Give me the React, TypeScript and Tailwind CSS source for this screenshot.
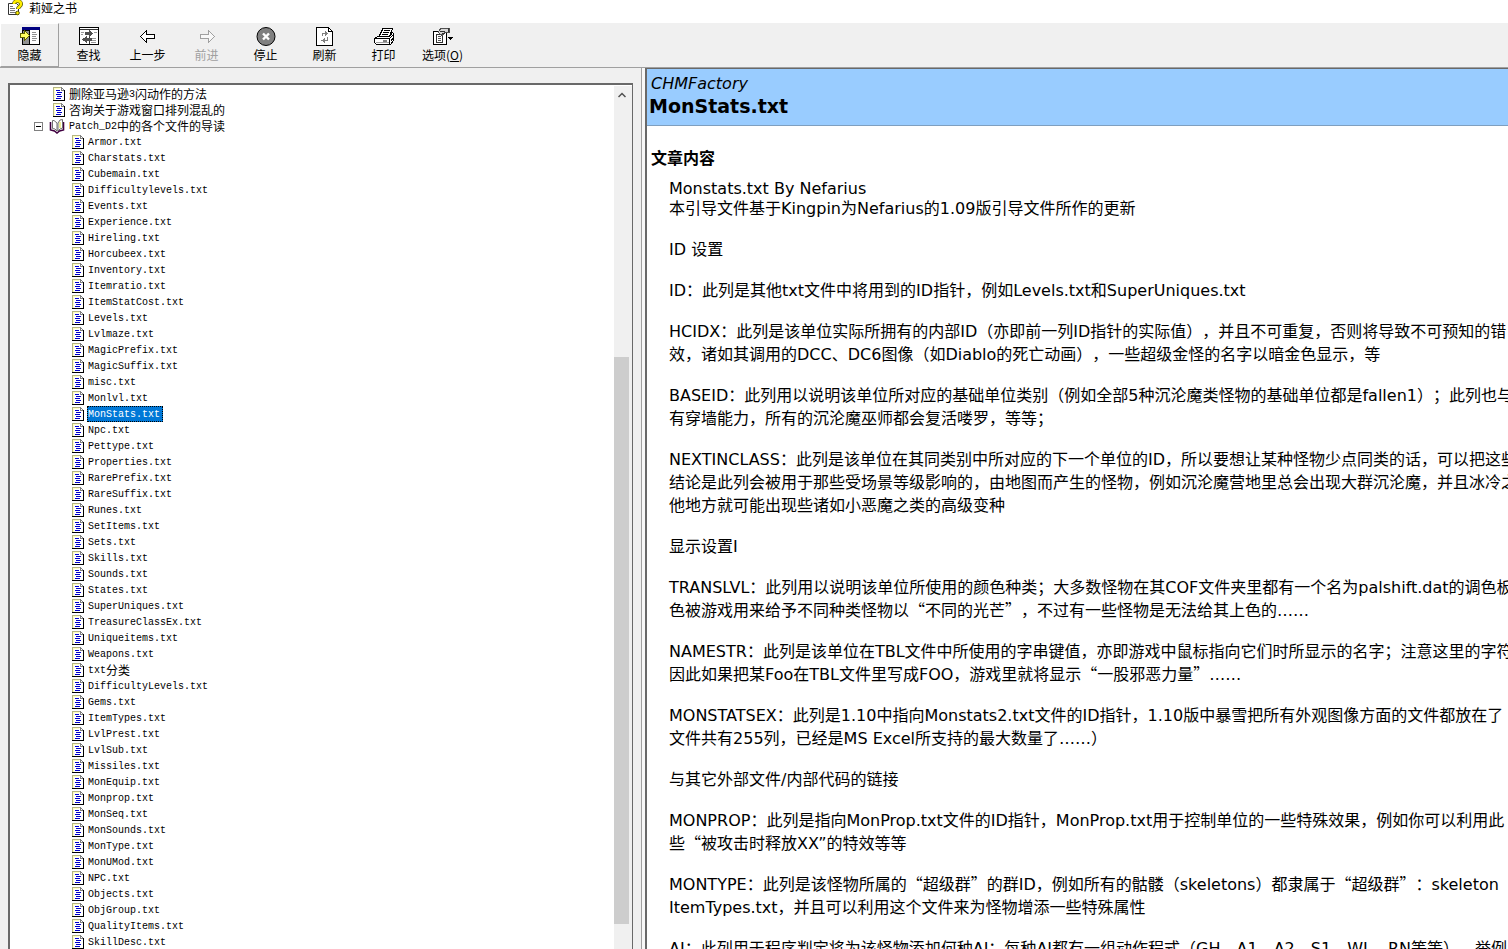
import { useState } from "react";
import type { ReactNode } from "react";

const tools = [
	{ id: "hide", label: "隐藏", raised: true },
	{ id: "find", label: "查找" },
	{ id: "back", label: "上一步" },
	{ id: "forward", label: "前进", disabled: true },
	{ id: "stop", label: "停止" },
	{ id: "refresh", label: "刷新" },
	{ id: "print", label: "打印" },
	{ id: "options", label: "选项" },
];

const topics = [
	"Armor.txt", "Charstats.txt", "Cubemain.txt", "Difficultylevels.txt", "Events.txt",
	"Experience.txt", "Hireling.txt", "Horcubeex.txt", "Inventory.txt", "Itemratio.txt",
	"ItemStatCost.txt", "Levels.txt", "Lvlmaze.txt", "MagicPrefix.txt", "MagicSuffix.txt",
	"misc.txt", "Monlvl.txt", "MonStats.txt", "Npc.txt", "Pettype.txt", "Properties.txt",
	"RarePrefix.txt", "RareSuffix.txt", "Runes.txt", "SetItems.txt", "Sets.txt", "Skills.txt",
	"Sounds.txt", "States.txt", "SuperUniques.txt", "TreasureClassEx.txt", "Uniqueitems.txt",
	"Weapons.txt", "txt分类", "DifficultyLevels.txt", "Gems.txt", "ItemTypes.txt", "LvlPrest.txt",
	"LvlSub.txt", "Missiles.txt", "MonEquip.txt", "Monprop.txt", "MonSeq.txt", "MonSounds.txt",
	"MonType.txt", "MonUMod.txt", "NPC.txt", "Objects.txt", "ObjGroup.txt", "QualityItems.txt",
	"SkillDesc.txt",
];

const paragraphs = [
	["ID 设置"],
	["ID：此列是其他txt文件中将用到的ID指针，例如Levels.txt和SuperUniques.txt"],
	[
		"HCIDX：此列是该单位实际所拥有的内部ID（亦即前一列ID指针的实际值），并且不可重复，否则将导致不可预知的错",
		"效，诸如其调用的DCC、DC6图像（如Diablo的死亡动画），一些超级金怪的名字以暗金色显示，等",
	],
	[
		"BASEID：此列用以说明该单位所对应的基础单位类别（例如全部5种沉沦魔类怪物的基础单位都是fallen1）；此列也与",
		"有穿墙能力，所有的沉沦魔巫师都会复活喽罗，等等；",
	],
	[
		"NEXTINCLASS：此列是该单位在其同类别中所对应的下一个单位的ID，所以要想让某种怪物少点同类的话，可以把这些",
		"结论是此列会被用于那些受场景等级影响的，由地图而产生的怪物，例如沉沦魔营地里总会出现大群沉沦魔，并且冰冷之",
		"他地方就可能出现些诸如小恶魔之类的高级变种",
	],
	["显示设置I"],
	[
		"TRANSLVL：此列用以说明该单位所使用的颜色种类；大多数怪物在其COF文件夹里都有一个名为palshift.dat的调色板",
		"色被游戏用来给予不同种类怪物以“不同的光芒”，不过有一些怪物是无法给其上色的……",
	],
	[
		"NAMESTR：此列是该单位在TBL文件中所使用的字串键值，亦即游戏中鼠标指向它们时所显示的名字；注意这里的字符",
		"因此如果把某Foo在TBL文件里写成FOO，游戏里就将显示“一股邪恶力量”……",
	],
	[
		"MONSTATSEX：此列是1.10中指向Monstats2.txt文件的ID指针，1.10版中暴雪把所有外观图像方面的文件都放在了",
		"文件共有255列，已经是MS Excel所支持的最大数量了……）",
	],
	["与其它外部文件/内部代码的链接"],
	[
		"MONPROP：此列是指向MonProp.txt文件的ID指针，MonProp.txt用于控制单位的一些特殊效果，例如你可以利用此",
		"些“被攻击时释放XX”的特效等等",
	],
	[
		"MONTYPE：此列是该怪物所属的“超级群”的群ID，例如所有的骷髅（skeletons）都隶属于“超级群”：skeleton",
		"ItemTypes.txt，并且可以利用这个文件来为怪物增添一些特殊属性",
	],
	["AI：此列用于程序判定将为该怪物添加何种AI；每种AI都有一组动作程式（GH、A1、A2、S1、WL、RN等等），举例"],
];

// Odd pieces are the Latin runs, the others are Chinese
const Mixed = ({ text, latin }: { text: string; latin: string }) => (
	<>
		{text.split(/([\x20-\x7e]+”?|…+)/).map((part, i) =>
			i % 2 ? <span key={i} className={latin}>{part}</span> : part
		)}
	</>
);

const ToolIcon = ({ id }: { id: string }) => {
	const shapes: Record<string, ReactNode> = {
		hide: (
			<>
				<path d="M2 0h18v18H2z" fill="#000" />
				<path d="M3 4h6v13H3z" fill="#909090" />
				<path d="M10 3h9v14h-9z" fill="#fff" />
				<path d="M2 0h18v3H2z" fill="#000080" />
				<path d="M12 5.500h4M12 7.500h5M12 9.500h4M12 11.500h5M12 13.500h4" stroke="#909090" />
				<path d="M0.500 6.500h4v-3l5 5-5 5v-3h-4z" fill="#ffff60" stroke="#606000" />
			</>
		),
		find: (
			<>
				<path d="M0.500 0.500h19v17h-19z" fill="#fff" stroke="#000" />
				<path d="M1 2.500h18M10.500 3v14" stroke="#333" />
				<path d="M2 5.500h3M2 7.500h2M12 11.500h5M12 13.500h5M12 15.500h5M15 5.500h3" stroke="#999" />
				<path d="M6 5h4V3l4 3.500-4 3.500V8H6zM8 11h5v3H8v2l-5-3.500L8 9z" fill="#505050" />
			</>
		),
		back: <path d="M2.500 9.500l6-6v4h8v4h-8v4z" fill="#fff" stroke="#000" />,
		forward: <path d="M17.500 9.500l-6-6v4h-8v4h8v4z" fill="#f8f8f8" stroke="#a0a0a0" />,
		stop: (
			<>
				<circle cx="10" cy="9.500" r="9" fill="#808080" stroke="#000" />
				<path d="M7 6.500l6 6M13 6.500l-6 6" stroke="#fff" strokeWidth="2.400" />
			</>
		),
		refresh: (
			<>
				<path d="M1.500 0.500h12l4 4v14h-16z" fill="#fff" stroke="#000" />
				<path d="M13.500 0.500v4h4" fill="none" stroke="#000" />
				<path d="M7.500 9V6.500H10M12.500 10v3.500H9" fill="none" stroke="#808080" />
				<path d="M10 4v5l3-2.500zM9.500 11v5l-3-2.500z" fill="#808080" />
			</>
		),
		print: (
			<>
				<path d="M5 9.500l4-8h9.500l-3 8z" fill="#fff" stroke="#000" />
				<path d="M10 3.500h6M9 5.500h6M8 7.500h6" stroke="#000" />
				<path d="M0.500 11.500l3-2h12l3-4 1 1v7l-3 4h-14l-2-2z" fill="#fff" stroke="#000" />
				<path d="M1 11.500h14.500v5" fill="none" stroke="#000" />
				<path d="M15.500 11.500l4-4M16.500 14.500l3-4" stroke="#000" />
				<path d="M9 13.500h4" stroke="#808080" strokeWidth="2" />
				<path d="M2 15.500h13" stroke="#a0a0a0" />
			</>
		),
		options: (
			<>
				<path d="M0.500 4.500h13v13h-13z" fill="#fff" stroke="#000" />
				<path d="M3.500 7.500h6v8h-6z" fill="#fff" stroke="#333" />
				<path d="M5 9.500h3M5 11.500h3M5 13.500h3" stroke="#555" />
				<path d="M5 5l3-3.500h8v4h-4l-3 3z" fill="#d8d8d8" stroke="#505050" />
				<path d="M7 4.500h5M9 6.500h3M15.500 1v4" stroke="#333" />
				<path d="M15 10h5l-2.500 3z" fill="#000" />
			</>
		),
	};
	return (
		<svg className="h-5 w-5" viewBox="0 0 20 20" shapeRendering={id === "stop" ? "auto" : "crispEdges"} aria-hidden="true">
			{shapes[id]}
		</svg>
	);
};

const PageIcon = () => (
	<svg className="h-4 w-4 shrink-0" viewBox="0 0 16 16" shapeRendering="crispEdges" aria-hidden="true">
		<path d="M1 1h8l3 3v10H1z" fill="#fff" />
		<path d="M1.500 14V1.500H9" fill="none" stroke="#b5b583" />
		<path d="M2.500 14V2.500H8" fill="none" stroke="#ffffc0" />
		<path d="M9 1h1v1h1v1h1v1h1v1H9z" fill="#808080" />
		<path d="M10 3h1v1h-1z" fill="#fff" />
		<path d="M12.500 4v10.500H1" fill="none" stroke="#000" />
		<path d="M4 4.500h4M5 6.500h5M4 8.500h5M5 10.500h5M4 12.500h5" stroke="#0000c8" />
	</svg>
);

const BookIcon = () => (
	<svg className="h-4 w-4 shrink-0" viewBox="0 0 16 16" aria-hidden="true">
		<path d="M1.500 4v8l4 1 2.500 2 2.500-2 4-1V4" fill="#fff" stroke="#400040" strokeWidth="1.600" />
		<path d="M3.500 2.500h1.500L8 5v8l-2-2-2.500-.5z" fill="#fff" stroke="#707070" />
		<path d="M9 5l2-3 2.500-.5V10l-2.500 1-2 2z" fill="#fff" stroke="#707070" />
		<path d="M11 4v6" stroke="#e8e870" strokeWidth="1.500" />
	</svg>
);

const AppIcon = () => (
	<svg className="h-4 w-4" viewBox="0 0 16 16" aria-hidden="true">
		<path d="M1.500 3.500h8l2 2v9h-10z" fill="#fff" stroke="#333" />
		<path d="M3 6.500h3M3 8.500h5M3 10.500h5M3 12.500h6" stroke="#777" />
		<path d="M7 4c0-4 7-4 7 0 0 3-3 2.500-3 5" fill="none" stroke="#555500" strokeWidth="4" />
		<path d="M7 4c0-4 7-4 7 0 0 3-3 2.500-3 5" fill="none" stroke="#ffee00" strokeWidth="2.400" />
		<circle cx="10.500" cy="13" r="1.800" fill="#ffee00" stroke="#555500" />
	</svg>
);

const Topic = ({ title, selected, onSelect }: { title: string; selected: boolean; onSelect: () => void }) => (
	<button type="button" onClick={onSelect} className="flex h-4 items-center">
		<PageIcon />
		<span
			className={
				selected
					? "flex h-4 items-center bg-[#0078d7] pr-[3px] pl-px text-white outline-1 -outline-offset-1 outline-dotted outline-black"
					: "flex h-4 items-center pr-[3px] pl-px"
			}
		>
			<Mixed text={title} latin="pt-0.5 font-['Liberation_Mono',monospace] text-[10px]" />
		</span>
	</button>
);

const Contents = () => {
	const [current, setCurrent] = useState("MonStats.txt");
	const [open, setOpen] = useState(true);

	return (
		<nav aria-label="目录" className="min-w-0 flex-1 overflow-hidden whitespace-nowrap text-xs leading-4">
			<ul className="pl-[42px]">
				{["删除亚马逊3闪动作的方法", "咨询关于游戏窗口排列混乱的"].map((title) => (
					<li key={title}>
						<Topic title={title} selected={current === title} onSelect={() => setCurrent(title)} />
					</li>
				))}
			</ul>
			<button type="button" aria-expanded={open} onClick={() => setOpen(!open)} className="flex h-4 items-center pl-6">
				<svg className="mr-1.5 h-[9px] w-[9px]" viewBox="0 0 9 9" shapeRendering="crispEdges" aria-hidden="true">
					<path d="M0.500 0.500h8v8h-8z" fill="#fff" stroke="#808080" />
					<path d="M2 4.500h5" stroke="#000" />
				</svg>
				<BookIcon />
				<span className="flex h-4 items-center pl-1">
					<Mixed text="Patch_D2中的各个文件的导读" latin="pt-0.5 font-['Liberation_Mono',monospace] text-[10px]" />
				</span>
			</button>
			{open && (
				<ul className="pl-[61px]">
					{topics.map((title) => (
						<li key={title}>
							<Topic title={title} selected={current === title} onSelect={() => setCurrent(title)} />
						</li>
					))}
				</ul>
			)}
		</nav>
	);
};

const ScrollBar = () => (
	<div className="flex w-4 shrink-0 flex-col bg-[#f0f0f0]">
		<button type="button" aria-label="向上滚动" className="flex h-[17px] items-center justify-center">
			<svg className="h-2 w-2" viewBox="0 0 8 8" aria-hidden="true">
				<path d="M0.500 6L4 2.500 7.500 6" fill="none" stroke="#505050" strokeWidth="1.500" />
			</svg>
		</button>
		<div className="flex-[254]" />
		<div className="mr-px flex-[567] bg-[#cdcdcd]" />
		<div className="flex-[25]" />
	</div>
);

const App = () => (
	<div
		lang="zh-CN"
		className="flex h-screen flex-col overflow-hidden bg-[#f0f0f0] font-['Noto_Sans_CJK_SC',sans-serif] text-black"
	>
		<header className="flex h-[23px] shrink-0 items-start gap-1.5 bg-white pl-[7px] text-xs leading-4">
			<AppIcon />
			<h1>莉娅之书</h1>
		</header>

		{/* Toolbar */}
		<div role="toolbar" className="flex h-[45px] shrink-0 border-b border-[#a0a0a0]">
			{tools.map((tool) => (
				<button
					key={tool.id}
					type="button"
					disabled={tool.disabled}
					className={`flex w-[59px] shrink-0 flex-col items-center border pt-[3px] text-xs leading-4 ${
						tool.raised ? "border-t-white border-r-[#a0a0a0] border-b-[#a0a0a0] border-l-white" : "border-transparent"
					} ${tool.disabled ? "text-[#a0a0a0]" : ""}`}
				>
					<ToolIcon id={tool.id} />
					<span>
						{tool.label}
						{tool.id === "options" && <>(<u>O</u>)</>}
					</span>
				</button>
			))}
		</div>

		<div className="flex min-h-0 flex-1">
			{/* Contents pane */}
			<div className="flex w-[642px] shrink-0 border-r border-[#a0a0a0] pt-[15px] pr-2 pl-2">
				<div className="flex min-w-0 flex-1 border-t-2 border-r border-l-2 border-[#696969] bg-white pt-px">
					<Contents />
					<ScrollBar />
					<div className="w-0.5 bg-[#f0f0f0]" />
				</div>
			</div>
			<div className="w-[3px] shrink-0 bg-[#f8f8f8]" />

			{/* Article */}
			<main className="min-w-0 flex-1 overflow-hidden border-t border-l-2 border-[#696969] bg-white font-['DejaVu_Sans','Noto_Sans_CJK_SC',sans-serif] whitespace-nowrap">
				<div className="h-[57px] border-b border-[#7f9fbf] bg-[#99ccff] pt-[5px] pl-0.5">
					<p className="pl-0.5 text-base leading-5 italic">CHMFactory</p>
					<h2 className="text-[19px] leading-6 font-bold">MonStats.txt</h2>
				</div>
				<h3 className="mt-[19px] pl-1 font-['Noto_Sans_CJK_SC',sans-serif] text-base leading-6 font-bold">文章内容</h3>
				<div className="mt-[13px] pl-[22px] font-['Noto_Sans_CJK_SC',sans-serif] text-base leading-[23px] [text-spacing-trim:space-all]">
					<p className="font-['DejaVu_Sans',sans-serif] leading-[14px]">Monstats.txt By Nefarius</p>
					<p className="mb-[18px] h-[23px]">
						<Mixed text="本引导文件基于Kingpin为Nefarius的1.09版引导文件所作的更新" latin="font-['DejaVu_Sans',sans-serif]" />
					</p>
					{paragraphs.map((lines) => (
						<p key={lines[0]} className="mb-[18px]">
							{lines.map((line) => (
								<span key={line} className="block h-[23px]">
									<Mixed text={line} latin="font-['DejaVu_Sans',sans-serif]" />
								</span>
							))}
						</p>
					))}
				</div>
			</main>
		</div>
	</div>
);

export default App;
